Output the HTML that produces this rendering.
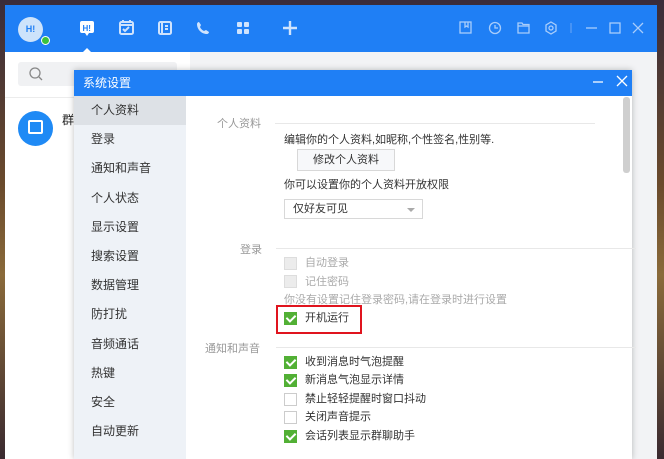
<!DOCTYPE html>
<html><head><meta charset="utf-8"><style>
*{margin:0;padding:0;box-sizing:border-box}
body{width:664px;height:459px;overflow:hidden;position:relative;font-family:"Liberation Sans","Noto Sans CJK SC",sans-serif;background:linear-gradient(180deg,#3a2c3a,#6a4a2c 40%,#8a6a3a 60%,#3a2a30);}
.abs{position:absolute}
.win{left:5px;top:5px;width:652px;height:454px;background:#f2f3f5}
.hdr{left:5px;top:5px;width:652px;height:47px;background:#1f7ff5}
.lp{left:5px;top:52px;width:185px;height:407px;background:#fff}
.dlg{left:74px;top:70px;width:558px;height:389px;background:#fff;box-shadow:0 0 6px rgba(0,0,0,.25)}
.dt{left:74px;top:70px;width:558px;height:26px;background:#1f7ff5;color:#fff;font-size:12px;line-height:26px;padding-left:9px}
.sb{left:74px;top:96px;width:112px;height:363px;background:#eef2f7}
.si{position:absolute;left:0;width:112px;height:29px;line-height:29px;padding-left:17px;font-size:12px;color:#333}
.t{position:absolute;font-size:11px;color:#333;white-space:nowrap;line-height:14px}
.g{color:#999}
.ln{position:absolute;height:1px;background:#e8e8e8}
.cb{position:absolute;left:284px;width:13px;height:13px;border:1px solid #ccc;background:#fff}
.cb.on{background:#52b035;border-color:#52b035}
.cb.on:after{content:"";position:absolute;left:3px;top:0px;width:4px;height:7px;border:solid #fff;border-width:0 2px 2px 0;transform:rotate(45deg)}
.cb.dis{background:#ececec;border-color:#ddd}
</style></head><body>
<div class="abs win"></div>
<div class="abs hdr"></div>
<div class="abs" style="left:18px;top:17px;width:25px;height:25px;border-radius:50%;background:#cde3fb;color:#1f7ff5;font-size:9px;font-weight:bold;text-align:center;line-height:25px">H!</div>
<div class="abs" style="left:41px;top:36px;width:9px;height:9px;border-radius:50%;background:#3cc23c;border:1.5px solid #fff"></div>
<svg class="abs" style="left:70px;top:15px" width="240" height="40" fill="none" stroke="#fff" stroke-width="2">
<rect x="10" y="6" width="14" height="12" rx="2" fill="#fff" stroke="none"/><text x="12.5" y="16" font-size="8" font-weight="bold" fill="#1f7ff5" stroke="none" font-family="Liberation Sans">H!</text><path d="M15 18l2 3 2-3" fill="#fff" stroke="none"/>
<path d="M13 37l4-4 4 4z" fill="#fff" stroke="none"/>
<rect x="50" y="7" width="13" height="12" rx="1.5" stroke="#cfe3fd"/><path d="M50 10h13M53 5v3M60 5v3M53 14l2 2 4-4" stroke="#cfe3fd"/>
<rect x="89" y="7" width="12" height="12" rx="1.5" stroke="#cfe3fd"/><path d="M92 7v12M95 11h3M95 14h3" stroke="#cfe3fd"/>
<path d="M129 7c-1 0-2 1-2 2 0 5 4 10 10 10 1 0 2-1 2-2l-3-2-2 1c-2-1-3-2-4-4l1-2z" fill="#cfe3fd" stroke="none"/>
<rect x="167" y="7" width="5" height="5" rx="1" fill="#cfe3fd" stroke="none"/><rect x="174" y="7" width="5" height="5" rx="1" fill="#cfe3fd" stroke="none"/><rect x="167" y="14" width="5" height="5" rx="1" fill="#cfe3fd" stroke="none"/><rect x="174" y="14" width="5" height="5" rx="1" fill="#cfe3fd" stroke="none"/>
<path d="M220 6v14M213 13h14" stroke="#cfe3fd" stroke-width="2.4"/>
</svg>
<svg class="abs" style="left:455px;top:18px" width="200" height="24" fill="none" stroke="#a9cdfb" stroke-width="1.3">
<rect x="5" y="4" width="11" height="11"/><path d="M10 4v5l1.5-1 1.5 1V4"/>
<circle cx="40" cy="10" r="5.5"/><path d="M40 7v3h3"/>
<path d="M63 5h4l1 1.5h6v8.5h-11z"/><path d="M63 8h11"/>
<path d="M96 4l5 3v6l-5 3-5-3V7z"/><circle cx="96" cy="10" r="2"/>
<path d="M116 5v10" stroke="#5d9ef5"/>
<path d="M131 10h11"/><rect x="155" y="5" width="10" height="10"/><path d="M178 5l10 10M188 5l-10 10"/>
</svg>
<div class="abs lp"></div>
<div class="abs" style="left:18px;top:62px;width:159px;height:24px;background:#f0f1f3;border-radius:3px"></div>
<svg class="abs" style="left:28px;top:66px" width="16" height="16" fill="none" stroke="#888" stroke-width="1.3"><circle cx="7" cy="7" r="5"/><path d="M11 11l3 3"/></svg>
<div class="abs" style="left:5px;top:97px;width:185px;height:1px;background:#ececec"></div>
<div class="abs" style="left:18px;top:111px;width:35px;height:35px;border-radius:50%;background:#1f8af5"></div>
<div class="abs" style="left:28px;top:120px;width:15px;height:14px;border:2px solid #fff;border-radius:2px"></div>
<div class="abs t" style="left:62px;top:113px;font-size:12px;color:#222">群</div>

<div class="abs dlg"></div>
<div class="abs dt">系统设置</div>
<svg class="abs" style="left:590px;top:73px" width="42" height="20" stroke="#fff" stroke-width="1.3"><path d="M3 9h10M27 3l10 10M37 3l-10 10"/></svg>
<div class="abs sb">
<div class="si" style="top:0;background:#dde1e6">个人资料</div>
<div class="si" style="top:29px">登录</div>
<div class="si" style="top:58px">通知和声音</div>
<div class="si" style="top:88px">个人状态</div>
<div class="si" style="top:117px">显示设置</div>
<div class="si" style="top:146px">搜索设置</div>
<div class="si" style="top:175px">数据管理</div>
<div class="si" style="top:204px">防打扰</div>
<div class="si" style="top:234px">音频通话</div>
<div class="si" style="top:263px">热键</div>
<div class="si" style="top:292px">安全</div>
<div class="si" style="top:321px">自动更新</div>
</div>
<div class="abs" style="left:623px;top:97px;width:7px;height:76px;background:#cfcfcf;border-radius:3px"></div>

<div class="t g" style="left:217px;top:117px">个人资料</div>
<div class="ln" style="left:275px;top:123px;width:320px"></div>
<div class="t" style="left:284px;top:133px">编辑你的个人资料,如昵称,个性签名,性别等.</div>
<div class="abs" style="left:297px;top:149px;width:98px;height:22px;border:1px solid #d8d8d8;background:#f7f8fa;font-size:11px;line-height:20px;text-align:center;color:#333">修改个人资料</div>
<div class="t" style="left:284px;top:178px">你可以设置你的个人资料开放权限</div>
<div class="abs" style="left:284px;top:199px;width:139px;height:20px;border:1px solid #d8d8d8;background:#fff;font-size:11px;line-height:18px;padding-left:8px;color:#333">仅好友可见</div>
<div class="abs" style="left:407px;top:208px;border:4px solid transparent;border-top-color:#aaa"></div>

<div class="t g" style="left:240px;top:243px">登录</div>
<div class="ln" style="left:276px;top:248px;width:360px"></div>
<div class="cb dis" style="top:257px"></div><div class="t g" style="left:305px;top:256px;color:#aaa">自动登录</div>
<div class="cb dis" style="top:275px"></div><div class="t g" style="left:305px;top:275px;color:#aaa">记住密码</div>
<div class="t g" style="left:284px;top:293px;color:#aaa">你没有设置记住登录密码,请在登录时进行设置</div>
<div class="cb on" style="top:312px"></div><div class="t" style="left:305px;top:311px">开机运行</div>
<div class="abs" style="left:276px;top:305px;width:86px;height:29px;border:2px solid #e0141e"></div>

<div class="t g" style="left:205px;top:342px">通知和声音</div>
<div class="ln" style="left:276px;top:347px;width:360px"></div>
<div class="cb on" style="top:356px"></div><div class="t" style="left:305px;top:355px">收到消息时气泡提醒</div>
<div class="cb on" style="top:374px"></div><div class="t" style="left:305px;top:373px">新消息气泡显示详情</div>
<div class="cb" style="top:393px"></div><div class="t" style="left:305px;top:392px">禁止轻轻提醒时窗口抖动</div>
<div class="cb" style="top:411px"></div><div class="t" style="left:305px;top:410px">关闭声音提示</div>
<div class="cb on" style="top:430px"></div><div class="t" style="left:305px;top:429px">会话列表显示群聊助手</div>
</body></html>
